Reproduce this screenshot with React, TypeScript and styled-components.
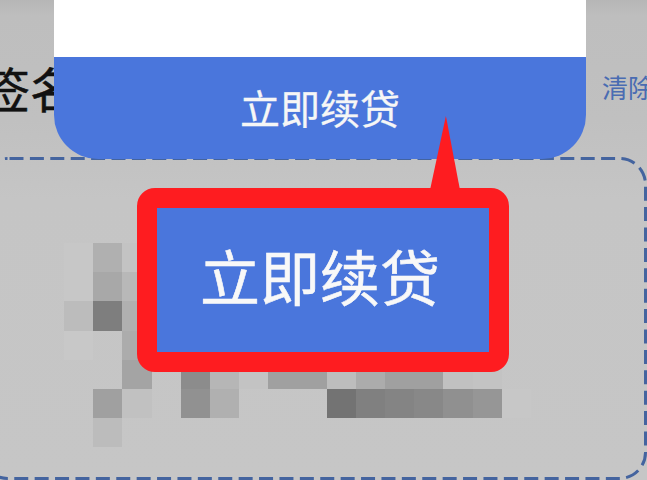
import styled, { createGlobalStyle } from 'styled-components';

const BLUE = '#4a76dc';
const RED = '#fe1c20';
const CELL = 29.2;

// rows of the blurred signature, one grey per mosaic cell ('' leaves the box colour showing)
const SIGNATURE_ROWS: string[][] = [
  ['#c7c7c7', '#b0b0b0', '#c3c3c3'],
  ['#c7c7c7', '#a8a8a8', '#b8b8b8'],
  ['#bcbcbc', '#7e7e7e', '#b0b0b0'],
  ['#c8c8c8', '', '#acacac'],
  ['', '', '#a4a4a4', '', '#8c8c8c', '#b6b6b6', '#c3c3c3', '#a0a0a0', '#a0a0a0', '#bdbdbd', '#acacac', '#a0a0a0', '#a0a0a0', '#c1c1c1', '#c3c3c3', ''],
  ['', '#a0a0a0', '#c1c1c1', '', '#919191', '#b0b0b0', '', '', '', '#737373', '#808080', '#848484', '#888888', '#909090', '#969696', '#c7c7c7'],
  ['', '#bcbcbc'],
];

const GlobalStyle = createGlobalStyle`
  html, body {
    margin: 0;
    padding: 0;
    background: #c4c4c4;
  }
`;

function SignatureOutline() {
  return (
    <StyledOutline viewBox="0 0 667 323" aria-hidden="true">
      <rect x="1.5" y="1.5" width="664" height="320" rx="26" fill="none" stroke="#44649f" strokeWidth="3" strokeDasharray="14 6.4" strokeDashoffset="-2" />
    </StyledOutline>
  );
}

function App() {
  return (
    <StyledPage>
      <GlobalStyle />
      <StyledSignatureHeader>
        <StyledSignatureTitle>签名</StyledSignatureTitle>
        <StyledClearLink>清除</StyledClearLink>
      </StyledSignatureHeader>
      <StyledSignatureBox>
        <SignatureOutline />
        <StyledMosaic>
          {SIGNATURE_ROWS.map((row, rowIndex) => row.map((shade, cellIndex) => (
            <StyledMosaicCell key={`${rowIndex}-${cellIndex}`} $shade={shade} $row={rowIndex} $column={cellIndex} />
          )))}
        </StyledMosaic>
      </StyledSignatureBox>
      <StyledDialog>
        <StyledDialogBody />
        <StyledDialogAction>立即续贷</StyledDialogAction>
      </StyledDialog>
      <StyledCallout>立即续贷</StyledCallout>
    </StyledPage>
  );
}

const StyledPage = styled.div`
  position: relative;
  width: 647px;
  height: 480px;
  overflow: hidden;
  background: linear-gradient(#b6b6b6 0, #bebebe 16px, #c0c0c0 120px, #c5c5c5 200px, #c6c6c6 100%);
  font-family: 'Noto Sans CJK SC', 'Liberation Sans', sans-serif;
`;

const StyledSignatureHeader = styled.div`
  display: flex;
  justify-content: space-between;
  align-items: center;
  height: 157px;
  margin: 0 -7px 0 -18px;
  padding: 44px 0 27px;
  box-sizing: border-box;
`;

const StyledSignatureTitle = styled.h2`
  margin: 0;
  font-size: 48px;
  font-weight: 400;
  line-height: 1;
  color: #111;
  -webkit-text-stroke: 0.5px #111;
`;

const StyledClearLink = styled.span`
  font-size: 26px;
  line-height: 1;
  color: #4a6cb2;
`;

const StyledSignatureBox = styled.div`
  position: relative;
  width: 667px;
  height: 323px;
  margin-left: -20px;
  padding: 86px 0 0 84px;
  box-sizing: border-box;
`;

const StyledOutline = styled.svg`
  position: absolute;
  top: 0;
  left: 0;
  width: 667px;
  height: 323px;
`;

const StyledMosaic = styled.div`
  display: grid;
  grid-template-columns: repeat(16, ${CELL}px);
  grid-template-rows: repeat(7, ${CELL}px);
  filter: blur(0.4px);
`;

const StyledMosaicCell = styled.div<{ $shade: string; $row: number; $column: number }>`
  grid-row: ${({ $row }) => $row + 1};
  grid-column: ${({ $column }) => $column + 1};
  background: ${({ $shade }) => $shade || 'transparent'};
`;

const StyledDialog = styled.div`
  position: absolute;
  top: 0;
  left: 54px;
  width: 532px;
  height: 159px;
  display: flex;
  flex-direction: column;
  border-radius: 0 0 44px 44px;
  overflow: hidden;
`;

const StyledDialogBody = styled.div`
  height: 57px;
  background: #fff;
`;

const StyledDialogAction = styled.div`
  flex: 1;
  display: flex;
  justify-content: center;
  align-items: center;
  padding-bottom: 2px;
  background: ${BLUE};
  color: #f6f6f6;
  font-size: 40px;
  line-height: 1;
  -webkit-text-stroke: 0.3px #f6f6f6;
`;

const StyledCallout = styled.div`
  position: absolute;
  top: 188px;
  left: 137px;
  width: 372px;
  height: 184px;
  box-sizing: border-box;
  display: flex;
  justify-content: center;
  align-items: center;
  padding: 0 6px 10px 0;
  border: 20px solid ${RED};
  border-radius: 18px;
  background: ${BLUE};
  color: #f8f8f8;
  font-size: 60px;
  line-height: 1;
  -webkit-text-stroke: 0.6px #f8f8f8;

  &::before {
    content: '';
    position: absolute;
    top: -92px;
    left: 273px;
    width: 30px;
    height: 74px;
    background: ${RED};
    clip-path: polygon(53% 0, 100% 100%, 0 100%);
  }
`;

export default App;
